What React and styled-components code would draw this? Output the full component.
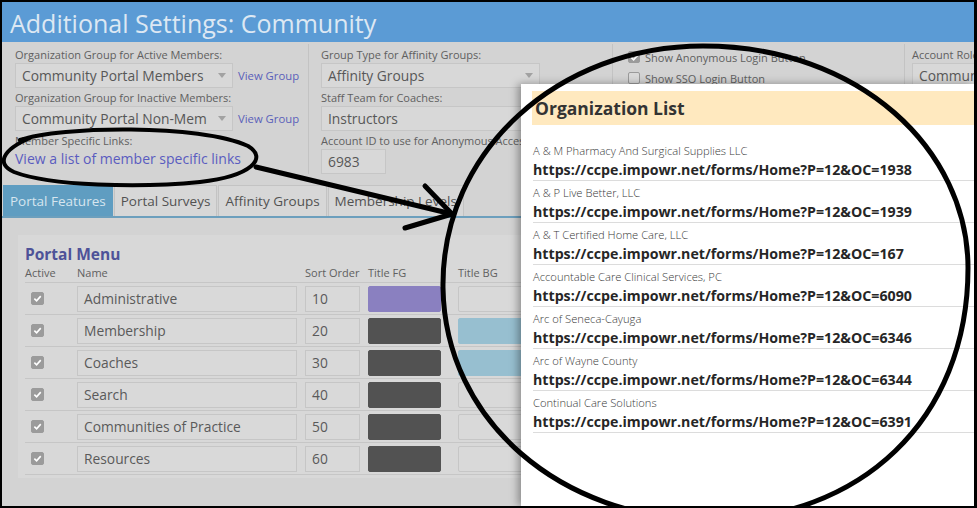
import React from "react";
import styled, { createGlobalStyle } from "styled-components";

const GlobalStyle = createGlobalStyle`
  html, body { margin: 0; padding: 0; background: #fff; }
  body { font-family: "Open Sans", "Noto Sans", sans-serif; }
`;

const settingsLeft = [
  { label: "Organization Group for Active Members:", value: "Community Portal Members" },
  { label: "Organization Group for Inactive Members:", value: "Community Portal Non-Mem" },
];

const menuRows = [
  { name: "Administrative", order: 10, fg: "#8a80c0", bg: null },
  { name: "Membership", order: 20, fg: "#525252", bg: "#97bfd0" },
  { name: "Coaches", order: 30, fg: "#525252", bg: "#97bfd0" },
  { name: "Search", order: 40, fg: "#525252", bg: null },
  { name: "Communities of Practice", order: 50, fg: "#525252", bg: null },
  { name: "Resources", order: 60, fg: "#525252", bg: null },
];

const orgs = [
  ["A & M Pharmacy And Surgical Supplies LLC", 1938],
  ["A & P Live Better, LLC", 1939],
  ["A & T Certified Home Care, LLC", 167],
  ["Accountable Care Clinical Services, PC", 6090],
  ["Arc of Seneca-Cayuga", 6346],
  ["Arc of Wayne County", 6344],
  ["Continual Care Solutions", 6391],
];

function CheckMark() {
  return (
    <svg width="9" height="9" viewBox="0 0 10 10">
      <path d="M1.5 5.2 L4 7.6 L8.6 2.4" fill="none" stroke="#fff" strokeWidth="1.8" />
    </svg>
  );
}

export default function App() {
  return (
    <>
      <GlobalStyle />
      <Frame>
        <TitleBar>Additional Settings: Community</TitleBar>

        <Settings>
          <Column $width={306} $pad={13} $first>
            {settingsLeft.map((s) => (
              <React.Fragment key={s.label}>
                <Label>{s.label}</Label>
                <FieldRow>
                  <Select $width={218}>
                    {s.value}
                    <Caret />
                  </Select>
                  <SmallLink>View Group</SmallLink>
                </FieldRow>
              </React.Fragment>
            ))}
            <Label>Member Specific Links:</Label>
            <BigLink>View a list of member specific links</BigLink>
          </Column>

          <Column $width={304} $pad={12}>
            <Label>Group Type for Affinity Groups:</Label>
            <FieldRow>
              <Select $width={219}>
                Affinity Groups
                <Caret />
              </Select>
            </FieldRow>
            <Label>Staff Team for Coaches:</Label>
            <FieldRow>
              <Select $width={219}>Instructors</Select>
            </FieldRow>
            <Label>Account ID to use for Anonymous Access</Label>
            <FieldRow>
              <Select $width={65}>6983</Select>
            </FieldRow>
          </Column>

          <Column $width={292} $pad={15}>
            <CheckRow>
              <Box $checked>
                <CheckMark />
              </Box>
              Show Anonymous Login Button
            </CheckRow>
            <CheckRow>
              <Box />
              Show SSO Login Button
            </CheckRow>
          </Column>

          <Column $width={80} $pad={7}>
            <Label>Account Role</Label>
            <FieldRow>
              <Select $width={120}>Community</Select>
            </FieldRow>
          </Column>
        </Settings>

        <TabBar>
          <Tab $active>Portal Features</Tab>
          <Tab>Portal Surveys</Tab>
          <Tab>Affinity Groups</Tab>
          <Tab>Membership Levels</Tab>
        </TabBar>

        <Panel>
          <PanelTitle>Portal Menu</PanelTitle>
          <MenuHead>
            <span>Active</span>
            <span>Name</span>
            <span>Sort Order</span>
            <span>Title FG</span>
            <span>Title BG</span>
          </MenuHead>
          {menuRows.map((r) => (
            <MenuRow key={r.name}>
              <Cell $padLeft={6}>
                <Box $checked $size={13}>
                  <CheckMark />
                </Box>
              </Cell>
              <Cell>
                <RowInput $width={220}>{r.name}</RowInput>
              </Cell>
              <Cell>
                <RowInput $width={55}>{r.order}</RowInput>
              </Cell>
              <Cell>
                <Swatch $color={r.fg} />
              </Cell>
              <Cell>
                <Swatch $color={r.bg} />
              </Cell>
            </MenuRow>
          ))}
        </Panel>

        <Modal>
          <ModalHeader>Organization List</ModalHeader>
          <OrgList>
            {orgs.map(([name, oc]) => (
              <OrgItem key={name}>
                <OrgName>{name}</OrgName>
                <OrgUrl>https://ccpe.impowr.net/forms/Home?P=12&amp;OC={oc}</OrgUrl>
              </OrgItem>
            ))}
          </OrgList>
        </Modal>

        <Annotation viewBox="0 0 977 508">
          <path
            d="M20 140 C 60 126, 200 124, 248 146 C 268 158, 252 176, 200 182 C 140 188, 50 186, 14 172 C -4 164, 2 150, 30 138"
            fill="none"
            stroke="#000"
            strokeWidth="4"
            strokeLinecap="round"
          />
          <path d="M256 167 L452 214" stroke="#000" strokeWidth="5" strokeLinecap="round" />
          <path d="M425 186 L452 214 L405 228" fill="none" stroke="#000" strokeWidth="5" strokeLinecap="round" strokeLinejoin="round" />
          <path
            d="M443 288 C 441 150, 560 46, 703 46 C 860 46, 968 150, 968 268 C 968 420, 860 520, 710 520 C 560 520, 445 420, 443 288 Z"
            fill="none"
            stroke="#000"
            strokeWidth="5"
          />
        </Annotation>
      </Frame>
    </>
  );
}

const Frame = styled.div`
  position: relative;
  width: 977px;
  height: 508px;
  box-sizing: border-box;
  border: 2px solid #000;
  border-right-width: 3px;
  background: #d3d3d3;
  overflow: hidden;
  display: flex;
  flex-direction: column;
  color: #5c5c5c;
`;

const TitleBar = styled.div`
  flex: none;
  height: 40px;
  line-height: 42px;
  padding-left: 8px;
  background: #5b9bd5;
  color: #dde8f3;
  font-size: 25px;
  white-space: nowrap;
`;

const Settings = styled.div`
  flex: none;
  display: flex;
  height: 143px;
  padding-top: 2px;
  box-sizing: border-box;
`;

const Column = styled.div`
  flex: none;
  width: ${(p) => p.$width}px;
  box-sizing: border-box;
  height: 130px;
  padding: 2px 0 0 ${(p) => p.$pad}px;
  border-left: ${(p) => (p.$first ? "none" : "1px solid #c3c3c3")};
  display: flex;
  flex-direction: column;
  white-space: nowrap;
  overflow: visible;
`;

const Label = styled.div`
  font-size: 11px;
  line-height: 16px;
  color: #606060;
  margin-top: 1px;
`;

const FieldRow = styled.div`
  display: flex;
  align-items: center;
  gap: 5px;
  margin-bottom: 1px;
`;

const Select = styled.div`
  position: relative;
  flex: none;
  width: ${(p) => p.$width}px;
  height: 25px;
  box-sizing: border-box;
  border: 1px solid #c6c6c6;
  background: #d8d8d8;
  font-size: 13.8px;
  line-height: 23px;
  padding-left: 6px;
  color: #575757;
  overflow: hidden;
`;

const Caret = styled.span`
  position: absolute;
  right: 6px;
  top: 9px;
  border-left: 4px solid transparent;
  border-right: 4px solid transparent;
  border-top: 5px solid #a2a2a2;
`;

const SmallLink = styled.span`
  font-size: 11.3px;
  color: #5a5fba;
`;

const BigLink = styled.div`
  font-size: 14px;
  line-height: 19px;
  color: #5a5cc0;
`;

const CheckRow = styled.div`
  display: flex;
  align-items: center;
  gap: 5px;
  height: 20px;
  margin-top: 1px;
  font-size: 11px;
  color: #606060;
`;

const Box = styled.span`
  flex: none;
  width: ${(p) => p.$size || 12}px;
  height: ${(p) => p.$size || 12}px;
  box-sizing: border-box;
  border-radius: 2px;
  display: inline-flex;
  align-items: center;
  justify-content: center;
  background: ${(p) => (p.$checked ? "#9b9b9b" : "#d9d9d9")};
  border: 1px solid ${(p) => (p.$checked ? "#9b9b9b" : "#9a9a9a")};
`;

const TabBar = styled.div`
  flex: none;
  display: flex;
  gap: 1px;
  height: 31px;
  padding-left: 1px;
  border-bottom: 2px solid #6c9fbd;
`;

const Tab = styled.div`
  box-sizing: border-box;
  height: 31px;
  padding: 0 6px;
  line-height: 30px;
  font-size: 13.5px;
  white-space: nowrap;
  color: ${(p) => (p.$active ? "#d6e5ef" : "#525252")};
  background: ${(p) => (p.$active ? "#5f9dc1" : "#d7d7d7")};
  border: 1px solid ${(p) => (p.$active ? "#5f9dc1" : "#c3c3c3")};
  border-bottom: none;
`;

const Panel = styled.div`
  flex: none;
  margin: 17px 0 0 16px;
  height: 243px;
  box-sizing: border-box;
  padding: 9px 0 0 7px;
  background: #d8d8d8;
`;

const PanelTitle = styled.div`
  font-size: 15.5px;
  font-weight: 700;
  line-height: 20px;
  color: #4e5298;
`;

const grid = `
  display: grid;
  grid-template-columns: 52px 228px 63px 90px 120px;
  border-bottom: 1px solid #c6c6c6;
`;

const MenuHead = styled.div`
  ${grid}
  height: 18px;
  font-size: 11px;
  line-height: 18px;
  color: #606060;
`;

const MenuRow = styled.div`
  ${grid}
  height: 31px;
  align-items: center;
`;

const Cell = styled.div`
  display: flex;
  align-items: center;
  padding-left: ${(p) => p.$padLeft || 0}px;
`;

const RowInput = styled.div`
  width: ${(p) => p.$width}px;
  height: 26px;
  box-sizing: border-box;
  border: 1px solid #c6c6c6;
  background: #d9d9d9;
  font-size: 13.8px;
  line-height: 24px;
  padding-left: 6px;
  color: #5a5a5a;
  white-space: nowrap;
`;

const Swatch = styled.div`
  width: 73px;
  height: 26px;
  box-sizing: border-box;
  border-radius: 2px;
  background: ${(p) => p.$color || "#d9d9d9"};
  border: 1px solid ${(p) => p.$color || "#c6c6c6"};
`;

const Modal = styled.div`
  position: absolute;
  left: 519px;
  top: 82px;
  right: 0;
  bottom: 0;
  background: #fff;
  box-shadow: -3px 0 8px rgba(0, 0, 0, 0.35);
  padding: 7px 0 0 11px;
  color: #333;
`;

const ModalHeader = styled.div`
  height: 34px;
  line-height: 34px;
  padding-left: 3px;
  background: #ffe9bf;
  font-size: 17.5px;
  font-weight: 700;
  color: #333;
`;

const OrgList = styled.div`
  margin-top: 14px;
  padding-left: 1px;
`;

const OrgItem = styled.div`
  height: 42px;
  box-sizing: border-box;
  padding-top: 4px;
  border-bottom: 1px solid #dcdcdc;
`;

const OrgName = styled.div`
  font-size: 11.2px;
  font-weight: 300;
  line-height: 15px;
  color: #3a3a3a;
  margin-bottom: 2px;
`;

const OrgUrl = styled.div`
  font-size: 14.2px;
  line-height: 20px;
  font-weight: 700;
  color: #262626;
  white-space: nowrap;
`;

const Annotation = styled.svg`
  position: absolute;
  left: -2px;
  top: -2px;
  width: 977px;
  height: 508px;
  pointer-events: none;
  overflow: visible;
`;
